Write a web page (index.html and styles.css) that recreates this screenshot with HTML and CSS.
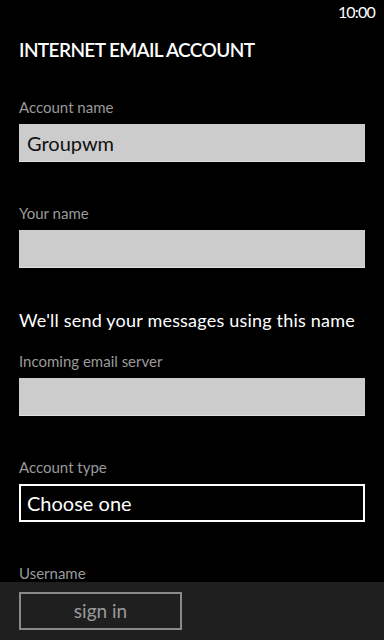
FILE: index.html
```html
<!DOCTYPE html>
<html>
<head>
<meta charset="utf-8">
<link rel="stylesheet" href="styles.css">
</head>
<body>
<div class="page">
  <div class="status"><span class="time">10:00</span></div>
  <main class="form">
    <h1 class="title">INTERNET EMAIL ACCOUNT</h1>
    <div class="field">
      <div class="label">Account name</div>
      <div class="input">Groupwm</div>
    </div>
    <div class="field">
      <div class="label">Your name</div>
      <div class="input"></div>
    </div>
    <p class="helper">We'll send your messages using this name</p>
    <div class="field">
      <div class="label">Incoming email server</div>
      <div class="input"></div>
    </div>
    <div class="field">
      <div class="label">Account type</div>
      <div class="select">Choose one</div>
    </div>
    <div class="field">
      <div class="label">Username</div>
      <div class="input"></div>
    </div>
  </main>
  <footer class="appbar">
    <button class="btn">sign in</button>
  </footer>
</div>
</body>
</html>
```
FILE: styles.css
```css
html, body {
  margin: 0;
  padding: 0;
  background: #000;
}
body {
  font-family: Lato, "Open Sans", sans-serif;
  color: #fff;
}
.page {
  width: 384px;
  height: 640px;
  display: flex;
  flex-direction: column;
  overflow: hidden;
}
.status {
  height: 32px;
  flex: none;
  display: flex;
  justify-content: flex-end;
  padding-right: 9px;
  font-size: 16px;
  line-height: 24px;
  letter-spacing: -0.8px;
}
.form {
  flex: 1;
  min-height: 0;
  overflow: hidden;
  padding: 0 19px;
}
.title {
  margin: 4px 0 33px;
  font-size: 19px;
  font-weight: 600;
  line-height: 28px;
  letter-spacing: -0.6px;
}
.field {
  margin-bottom: 41px;
}
.label {
  font-size: 15px;
  line-height: 20px;
  color: #9a9a9a;
  margin-bottom: 7px;
}
.input {
  height: 38px;
  box-sizing: border-box;
  background: #cccccc;
  border-bottom: 1px solid #e0e0e0;
  color: #111;
  font-size: 20px;
  line-height: 38px;
  padding-left: 8px;
}
.select {
  height: 38px;
  box-sizing: border-box;
  border: 2px solid #fff;
  color: #fff;
  font-size: 20px;
  line-height: 34px;
  padding-left: 6px;
}
.helper {
  margin: -1px 0 19px;
  font-size: 18px;
  line-height: 24px;
  letter-spacing: 0.2px;
}
.appbar {
  flex: none;
  height: 58px;
  background: #1f1f1f;
  padding: 10px 19px 0;
  box-sizing: border-box;
}
.btn {
  width: 163px;
  height: 38px;
  background: transparent;
  border: 2px solid #8a8a8a;
  color: #9a9a9a;
  font-family: inherit;
  font-size: 19px;
  line-height: 32px;
  padding: 0;
}
```
